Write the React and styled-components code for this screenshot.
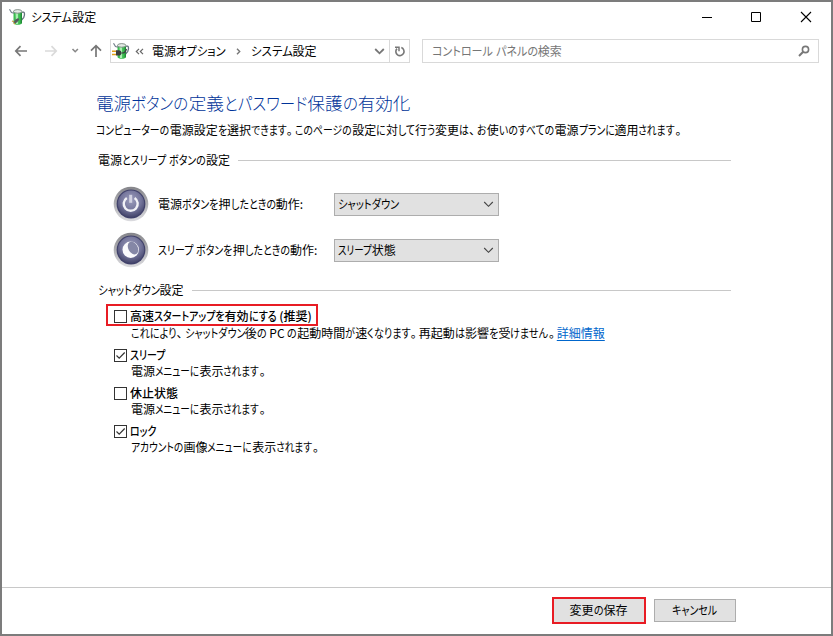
import React, { useState } from 'react';
import styled, { createGlobalStyle } from 'styled-components';

const GlobalStyle = createGlobalStyle`
  * {
    box-sizing: border-box;
  }
  body {
    margin: 0;
    background: #fff;
    font-family: 'Noto Sans CJK JP', sans-serif;
    font-size: 12px;
    color: #000;
  }
`;

const Window = styled.div`
  width: 833px;
  height: 636px;
  border: 2px solid #7c7c7c;
  background: #fff;
  display: flex;
  flex-direction: column;
  overflow: hidden;
`;

const Text = styled.span`
  font-size: ${(props) => props.$size || 12}px;
  line-height: ${(props) => props.$line || 16}px;
  font-weight: ${(props) => props.$weight || 400};
  font-feature-settings: 'palt';
  white-space: pre;
  color: ${(props) => props.$color || 'inherit'};
`;

// condensed kana, the way the Windows UI fonts set them
const Kana = styled.span`
  display: inline-block;
  transform: scaleX(${(props) => props.$scale});
  transform-origin: 0 50%;
  margin-right: ${(props) => -props.$count * 0.89 * (1 - props.$scale)}em;
`;

const Mark = styled.span`
  letter-spacing: 2px;
`;

const Label = ({ children, kana = 0.83, ...rest }) => (
  <Text {...rest}>
    {children.split(/([ぁ-んァ-ヶー]+|[、。])/).map((part, i) => {
      if (/^[、。]$/.test(part)) return <Mark key={i}>{part}</Mark>;
      if (i % 2 === 0) return part;
      return (
        <Kana key={i} $scale={kana} $count={part.length}>
          {part}
        </Kana>
      );
    })}
  </Text>
);

const TitleBar = styled.header`
  height: 30px;
  flex: none;
  display: flex;
  align-items: center;
  padding: 0 19px 0 6px;
  gap: 5px;
`;

const WindowControls = styled.div`
  margin-left: auto;
  display: flex;
  gap: 38px;
  svg {
    display: block;
  }
`;

const NavBar = styled.nav`
  height: 38px;
  flex: none;
  display: flex;
  align-items: center;
  padding: 0 12px 0 12px;
`;

const Arrows = styled.div`
  width: 96px;
  flex: none;
  svg {
    display: block;
  }
`;

const AddressBox = styled.div`
  width: 300px;
  height: 24px;
  flex: none;
  border: 1px solid #d9d9d9;
  display: flex;
  align-items: center;
  svg {
    display: block;
    flex: none;
  }
`;

const Crumbs = styled.div`
  flex: 1;
  display: flex;
  align-items: center;
  padding-left: 1px;
`;

const Separator = styled.svg`
  margin: 0 ${(props) => props.$after || 9}px 0 ${(props) => props.$before || 9}px;
`;

const Refresh = styled.div`
  width: 20px;
  height: 22px;
  margin-left: 4px;
  border-left: 1px solid #d9d9d9;
  display: flex;
  align-items: center;
  justify-content: center;
`;

const SearchBox = styled.div`
  flex: 1;
  height: 24px;
  margin-left: 12px;
  padding: 0 8px 0 9px;
  border: 1px solid #d9d9d9;
  display: flex;
  align-items: center;
  justify-content: space-between;
`;

const Content = styled.main`
  flex: 1;
  padding: 18px 100px 0 94px;
`;

const Heading = styled.h1`
  margin: 0;
  height: 30px;
  display: flex;
  align-items: center;
`;

const Intro = styled.p`
  margin: 0;
  padding-top: 3px;
  height: 32px;
`;

const SectionTitle = styled.h2`
  margin: 0;
  padding-left: 2px;
  height: 20px;
  font-size: 12px;
  display: flex;
  align-items: center;
  gap: 8px;
  &::after {
    content: '';
    flex: 1;
    height: 1px;
    background: #c8c8c8;
  }
`;

const ActionRow = styled.div`
  height: 46px;
  display: flex;
  align-items: center;
  padding-left: 17px;
  svg {
    display: block;
    flex: none;
  }
`;

const ActionName = styled.div`
  width: 176px;
  margin-left: 9px;
  display: flex;
`;

const Select = styled.button`
  width: 165px;
  height: 23px;
  padding: 0 4px 0 3px;
  border: 1px solid #adadad;
  background: #e1e1e1;
  font: inherit;
  color: inherit;
  display: flex;
  align-items: center;
  justify-content: space-between;
`;

const Actions = styled.div`
  height: 110px;
  padding-top: 11px;
`;

const Options = styled.div`
  padding: 4px 0 0 10px;
`;

const Option = styled.div`
  height: ${(props) => (props.$highlight ? 42 : 38)}px;
`;

const OptionHead = styled.label`
  width: fit-content;
  height: ${(props) => (props.$highlight ? 22 : 17)}px;
  padding: ${(props) => (props.$highlight ? '1px 4px 0 6px' : '0 0 0 8px')};
  border: ${(props) => (props.$highlight ? '2px solid #e81c24' : 'none')};
  display: flex;
  align-items: center;
  gap: 3px;
`;

const Box = styled.span`
  width: 13px;
  height: 13px;
  margin-top: 2px;
  border: 1px solid #333;
  display: block;
  svg {
    display: block;
  }
`;

const OptionNote = styled.div`
  margin-top: ${(props) => (props.$highlight ? -1 : 0)}px;
  padding-left: 25px;
  height: 16px;
  display: flex;
`;

const Link = styled.a`
  color: #0066cc;
  line-height: 16px;
  text-decoration: underline;
  text-underline-offset: 2px;
`;

const Footer = styled.footer`
  height: 47px;
  flex: none;
  border-top: 1px solid #c8c8c8;
  padding: 0 95px 2px 0;
  display: flex;
  align-items: center;
  justify-content: flex-end;
  gap: 8px;
`;

const Button = styled.button`
  width: ${(props) => (props.$highlight ? 94 : 82)}px;
  height: ${(props) => (props.$highlight ? 27 : 23)}px;
  padding: 0 1px 0 0;
  border: ${(props) => (props.$highlight ? '2px solid #e81c24' : '1px solid #adadad')};
  background: #e1e1e1;
  font: inherit;
  color: inherit;
  display: flex;
  align-items: center;
  justify-content: center;
`;

const PlanIcon = ({ plug }) => (
  <svg width="18" height="18" viewBox="0 0 18 18">
    <path d="M13.500 4.500c3.500-1.800 3.500 2 2.300 4.800l-2.500 3" fill="none" stroke="#66727e" strokeWidth="1.300" />
    <path d="M5.500 3.500v11.500c0 2.400 8.500 2.400 8.500 0V3.500z" fill="#3cbc50" />
    <path d="M7.500 4.500h2.600v11.500H8z" fill="#a9eeb0" />
    <path d="M12.600 4.500H14V15l-1.400.8z" fill="#228a38" />
    <ellipse cx="9.700" cy="3.400" rx="4.200" ry="1.800" fill="#e3ebe5" stroke="#6c7a72" strokeWidth=".8" />
    <path d="M1.500 1.200l2 3.300 2.500.7" fill="none" stroke="#75808c" strokeWidth="1.200" />
    {plug ? (
      <g>
        <path d="M0 9.300h4.500M0 12.500h4.500" stroke="#e0a21b" strokeWidth="1.500" />
        <path d="M4 8.200h2.500c2.200 0 3 1.400 3 2.700s-.8 2.700-3 2.700H4z" fill="#3b3e40" />
        <path d="M9.500 11c3.200.4 4.300-1.500 5-4" fill="none" stroke="#3b3e40" strokeWidth="1.100" />
      </g>
    ) : (
      <g>
        <path d="M5.500 14.500l2-3 2.800-1.400.9 1.700-2 2.400-2.500 1.300z" fill="#55595d" />
        <path d="M4 13l2 .7M5.800 16l1.200-1" stroke="#c79a3a" strokeWidth="1.200" />
      </g>
    )}
  </svg>
);

const RoundIcon = ({ id, children }) => (
  <svg width="36" height="36" viewBox="0 0 36 36">
    <defs>
      <linearGradient id={`${id}-rim`} x1="0" y1="0" x2="0" y2="1">
        <stop offset="0" stopColor="#85858a" />
        <stop offset=".5" stopColor="#b0b0b4" />
        <stop offset="1" stopColor="#dcdce0" />
      </linearGradient>
      <radialGradient id={`${id}-face`} cx=".5" cy=".36" r=".64">
        <stop offset="0" stopColor="#9c9dbc" />
        <stop offset=".6" stopColor="#74759b" />
        <stop offset="1" stopColor="#45466c" />
      </radialGradient>
    </defs>
    <circle cx="18" cy="18" r="17.300" fill={`url(#${id}-rim)`} />
    <circle cx="18" cy="18" r="14.400" fill="#40416a" />
    <circle cx="18" cy="17.800" r="13.200" fill={`url(#${id}-face)`} />
    {children}
  </svg>
);

const PowerIcon = () => (
  <RoundIcon id="power">
    <path d="M13.800 12a7 7 0 1 0 7.800 0" fill="none" stroke="#f2f2f7" strokeWidth="2.400" />
    <path d="M17.700 8.800v8" stroke="#d2d2e2" strokeWidth="3" />
  </RoundIcon>
);

const SleepIcon = () => (
  <RoundIcon id="sleep">
    <circle cx="17.700" cy="17.800" r="8.200" fill="#fafafd" />
    <ellipse cx="20" cy="16" rx="4.700" ry="6.800" transform="rotate(-28 20 16)" fill="#8587a6" />
  </RoundIcon>
);

const Chevron = ({ color = '#444', width = 1.1 }) => (
  <svg width="11" height="7" viewBox="0 0 11 7">
    <path d="M1.200 1l4.300 4.300L9.800 1" fill="none" stroke={color} strokeWidth={width} />
  </svg>
);

const actions = [
  { icon: PowerIcon, name: '電源ボタンを押したときの動作:', value: 'シャットダウン', kana: 0.85 },
  { icon: SleepIcon, name: 'スリープ ボタンを押したときの動作:', value: 'スリープ状態', kana: 0.79 },
];

const options = [
  {
    name: '高速スタートアップを有効にする (推奨)',
    note: 'これにより、シャットダウン後の PC の起動時間が速くなります。再起動は影響を受けません。',
    kana: 0.84,
    link: '詳細情報',
    highlight: true,
    checked: false,
  },
  { name: 'スリープ', note: '電源メニューに表示されます。', kana: 0.8, checked: true },
  { name: '休止状態', note: '電源メニューに表示されます。', kana: 0.8, checked: false },
  { name: 'ロック', note: 'アカウントの画像メニューに表示されます。', kana: 0.81, checked: true },
];

const App = () => {
  const [checked, setChecked] = useState(options.map((option) => option.checked));

  const toggle = (index) =>
    setChecked(checked.map((value, i) => (i === index ? !value : value)));

  return (
    <Window>
      <GlobalStyle />
      <TitleBar>
        <PlanIcon />
        <Label kana={0.94}>システム設定</Label>
        <WindowControls>
          <svg width="12" height="12" viewBox="0 0 12 12">
            <path d="M2 6.500h10" stroke="#000" />
          </svg>
          <svg width="12" height="12" viewBox="0 0 12 12">
            <path d="M1.500 1.500h9v9h-9z" fill="none" stroke="#000" />
          </svg>
          <svg width="12" height="12" viewBox="0 0 12 12">
            <path d="M1 1l10 10M11 1L1 11" stroke="#000" strokeWidth="1.100" />
          </svg>
        </WindowControls>
      </TitleBar>

      <NavBar>
        <Arrows>
          <svg width="92" height="16" viewBox="0 0 92 16" fill="none">
            <path d="M13 8H2M6.500 3.200L1.800 8l4.700 4.800" stroke="#777" strokeWidth="1.700" />
            <path d="M31 8h11M37.500 3.200L42.200 8l-4.700 4.800" stroke="#dadada" strokeWidth="1.700" />
            <path d="M58.500 6l2.700 2.700L63.900 6" stroke="#888" strokeWidth="1.600" />
            <path d="M82 14V3M77 7.700L82 2.700l5 5" stroke="#777" strokeWidth="1.700" />
          </svg>
        </Arrows>
        <AddressBox>
          <Crumbs>
            <PlanIcon plug />
            <Separator $before={5} $after={8} width="9" height="7" viewBox="0 0 9 7">
              <path d="M4 .8L1.300 3.500 4 6.200M8 .8L5.300 3.500 8 6.200" fill="none" stroke="#666" strokeWidth="1.200" />
            </Separator>
            <Label kana={0.94}>電源オプション</Label>
            <Separator $before={10} $after={10} width="5" height="7" viewBox="0 0 5 7">
              <path d="M1 .8l2.700 2.700L1 6.200" fill="none" stroke="#777" strokeWidth="1.400" />
            </Separator>
            <Label kana={0.96}>システム設定</Label>
          </Crumbs>
          <Chevron color="#777" width={1.8} />
          <Refresh>
            <svg width="12" height="13" viewBox="0 0 12 13" fill="none">
              <path d="M7.300 2.600A4.100 4.100 0 1 1 3 3.600" stroke="#777" strokeWidth="1.600" />
              <path d="M1 2.300h4v4" stroke="#777" strokeWidth="1.500" />
            </svg>
          </Refresh>
        </AddressBox>
        <SearchBox>
          <Label kana={0.92} $color="#767676">
            コントロール パネルの検索
          </Label>
          <svg width="12" height="12" viewBox="0 0 12 12" fill="none">
            <circle cx="7.500" cy="4.500" r="3.100" stroke="#777" strokeWidth="1.600" />
            <path d="M5.200 6.800L1 11" stroke="#777" strokeWidth="2" />
          </svg>
        </SearchBox>
      </NavBar>

      <Content>
        <Heading>
          <Label kana={0.88} $size={17.6} $line={24} $weight={300} $color="#003399">
            電源ボタンの定義とパスワード保護の有効化
          </Label>
        </Heading>
        <Intro>
          <Label kana={0.82}>
            コンピューターの電源設定を選択できます。このページの設定に対して行う変更は、お使いのすべての電源プランに適用されます。
          </Label>
        </Intro>

        <SectionTitle>
          <Label>電源とスリープ ボタンの設定</Label>
        </SectionTitle>
        <Actions>
          {actions.map(({ icon: Icon, name, value, kana }) => (
            <ActionRow key={name}>
              <Icon />
              <ActionName>
                <Label>{name}</Label>
              </ActionName>
              <Select>
                <Label kana={kana}>{value}</Label>
                <Chevron />
              </Select>
            </ActionRow>
          ))}
        </Actions>

        <SectionTitle>
          <Label kana={0.86}>シャットダウン設定</Label>
        </SectionTitle>
        <Options>
          {options.map((option, index) => (
            <Option key={option.name} $highlight={option.highlight}>
              <OptionHead $highlight={option.highlight} onClick={() => toggle(index)}>
                <Box>
                  {checked[index] && (
                    <svg width="11" height="11" viewBox="0 0 11 11">
                      <path d="M1.500 5.500l2.700 2.700 5.500-5.700" fill="none" stroke="#333" strokeWidth="1.200" />
                    </svg>
                  )}
                </Box>
                <Label $weight={500}>{option.name}</Label>
              </OptionHead>
              <OptionNote $highlight={option.highlight}>
                <Label kana={option.kana}>{option.note}</Label>
                {option.link && <Link>{option.link}</Link>}
              </OptionNote>
            </Option>
          ))}
        </Options>
      </Content>

      <Footer>
        <Button $highlight>
          <Label>変更の保存</Label>
        </Button>
        <Button>
          <Label>キャンセル</Label>
        </Button>
      </Footer>
    </Window>
  );
};

export default App;
